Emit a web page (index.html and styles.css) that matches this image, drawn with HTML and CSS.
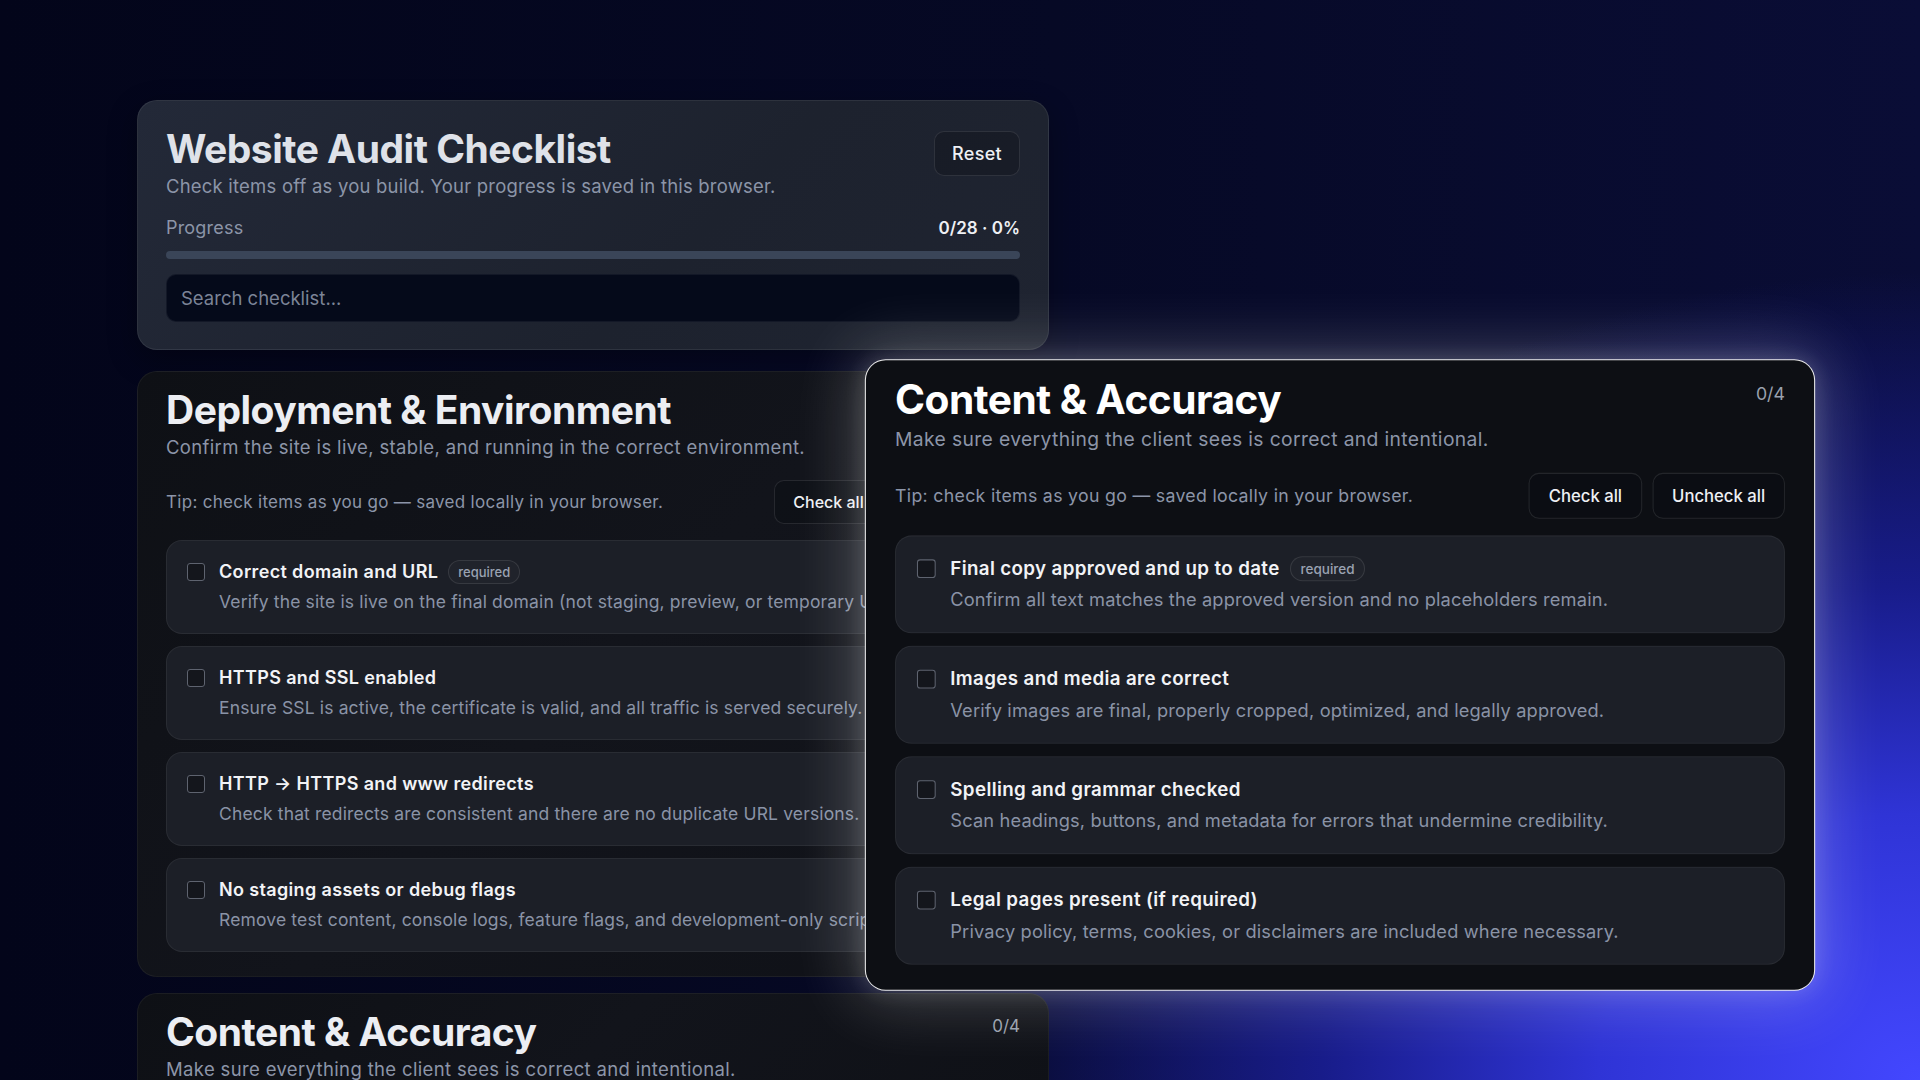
FILE: index.html
```html
<!DOCTYPE html>
<html lang="en">
<head>
<meta charset="utf-8">
<title>Website Audit Checklist</title>
<link rel="stylesheet" href="styles.css">
</head>
<body>
<main class="page">
  <section class="hero">
    <div class="hero-head">
      <div>
        <h1 class="hero-title">Website Audit Checklist</h1>
        <p class="hero-sub">Check items off as you build. Your progress is saved in this browser.</p>
      </div>
      <button class="btn btn-reset">Reset</button>
    </div>
    <div class="progress-row">
      <span class="progress-label">Progress</span>
      <span class="progress-value">0/28 · 0%</span>
    </div>
    <div class="bar"><div class="bar-fill" style="width:0%"></div></div>
    <div class="search">Search checklist...</div>
  </section>

  <section class="card">
    <div class="card-head">
      <h2 class="card-title">Deployment &amp; Environment</h2>
      <span class="count">0/4</span>
    </div>
    <p class="card-sub">Confirm the site is live, stable, and running in the correct environment.</p>
    <div class="tip-row">
      <span class="tip">Tip: check items as you go — saved locally in your browser.</span>
      <div class="actions">
        <button class="btn btn-check">Check all</button>
        <button class="btn btn-uncheck">Uncheck all</button>
      </div>
    </div>
    <ul class="items">
      <li class="item">
        <span class="box"></span>
        <div class="item-body">
          <div class="item-title">Correct domain and URL <span class="badge">required</span></div>
          <div class="item-desc">Verify the site is live on the final domain (not staging, preview, or temporary URLs).</div>
        </div>
      </li>
      <li class="item">
        <span class="box"></span>
        <div class="item-body">
          <div class="item-title">HTTPS and SSL enabled</div>
          <div class="item-desc">Ensure SSL is active, the certificate is valid, and all traffic is served securely.</div>
        </div>
      </li>
      <li class="item">
        <span class="box"></span>
        <div class="item-body">
          <div class="item-title">HTTP → HTTPS and www redirects</div>
          <div class="item-desc">Check that redirects are consistent and there are no duplicate URL versions.</div>
        </div>
      </li>
      <li class="item">
        <span class="box"></span>
        <div class="item-body">
          <div class="item-title">No staging assets or debug flags</div>
          <div class="item-desc">Remove test content, console logs, feature flags, and development-only scripts.</div>
        </div>
      </li>
    </ul>
  </section>

  <section class="card">
    <div class="card-head">
      <h2 class="card-title">Content &amp; Accuracy</h2>
      <span class="count">0/4</span>
    </div>
    <p class="card-sub">Make sure everything the client sees is correct and intentional.</p>
  </section>
</main>

<section class="card spotlight">
  <div class="card-head">
    <h2 class="card-title">Content &amp; Accuracy</h2>
    <span class="count">0/4</span>
  </div>
  <p class="card-sub">Make sure everything the client sees is correct and intentional.</p>
  <div class="tip-row">
    <span class="tip">Tip: check items as you go — saved locally in your browser.</span>
    <div class="actions">
      <button class="btn btn-check">Check all</button>
      <button class="btn btn-uncheck">Uncheck all</button>
    </div>
  </div>
  <ul class="items">
    <li class="item">
      <span class="box"></span>
      <div class="item-body">
        <div class="item-title">Final copy approved and up to date <span class="badge">required</span></div>
        <div class="item-desc">Confirm all text matches the approved version and no placeholders remain.</div>
      </div>
    </li>
    <li class="item">
      <span class="box"></span>
      <div class="item-body">
        <div class="item-title">Images and media are correct</div>
        <div class="item-desc">Verify images are final, properly cropped, optimized, and legally approved.</div>
      </div>
    </li>
    <li class="item">
      <span class="box"></span>
      <div class="item-body">
        <div class="item-title">Spelling and grammar checked</div>
        <div class="item-desc">Scan headings, buttons, and metadata for errors that undermine credibility.</div>
      </div>
    </li>
    <li class="item">
      <span class="box"></span>
      <div class="item-body">
        <div class="item-title">Legal pages present (if required)</div>
        <div class="item-desc">Privacy policy, terms, cookies, or disclaimers are included where necessary.</div>
      </div>
    </li>
  </ul>
</section>
</body>
</html>
```

FILE: styles.css
```css
* { box-sizing: border-box; }

html, body {
  margin: 0;
  width: 1920px;
  height: 1080px;
  overflow: hidden;
}

body {
  position: relative;
  font-family: Inter, "Noto Sans", "Liberation Sans", sans-serif;
  color: #e8eaf0;
  background-color: #04061a;
  background-image:
    radial-gradient(1150px 950px at 1920px 1080px, #4347ff 0%, #2f34d6 28%, #181c8a 52%, rgba(12, 14, 60, 0) 85%),
    linear-gradient(90deg, #03051a 0%, #060925 55%, #0a0d36 100%);
}

h1, h2, p { margin: 0; }
ul { margin: 0; padding: 0; list-style: none; }

.page {
  width: 912px;
  margin-left: 137px;
  padding-top: 100px;
  display: flex;
  flex-direction: column;
}

/* ---------- hero ---------- */
.hero {
  background: linear-gradient(135deg, #232938 0%, #1d222e 60%, #1f2431 100%);
  border: 1px solid rgba(255, 255, 255, 0.07);
  border-radius: 20px;
  padding: 26px 28px 27px;
  box-shadow: 0 10px 30px rgba(0, 0, 0, 0.3);
}

.hero-head {
  display: flex;
  justify-content: space-between;
  align-items: flex-start;
}

.hero-title {
  font-size: 39px;
  line-height: 44px;
  font-weight: 700;
  letter-spacing: -0.5px;
  color: #dfe2e9;
}

.hero-sub {
  margin-top: 3px;
  font-size: 18.5px;
  line-height: 24px;
  letter-spacing: 0.2px;
  color: #8c95a8;
}

.btn {
  font-family: inherit;
  font-size: 16px;
  font-weight: 500;
  color: #eef0f4;
  background: rgba(10, 12, 18, 0.35);
  border: 1px solid rgba(255, 255, 255, 0.1);
  border-radius: 10px;
  height: 44px;
  padding: 0 18px;
}

.btn-reset {
  margin-top: 4px;
  height: 45px;
  padding: 0 17px;
  font-size: 18px;
  letter-spacing: 0.3px;
  background: rgba(20, 24, 34, 0.6);
}

.progress-row {
  margin-top: 18px;
  display: flex;
  justify-content: space-between;
  align-items: center;
  line-height: 24px;
}

.progress-label { color: #8c95a8; font-size: 18px; letter-spacing: 0.2px; }
.progress-value { color: #eef0f4; font-weight: 600; font-size: 17px; }

.bar {
  margin-top: 11px;
  height: 8px;
  border-radius: 8px;
  background: #3a4558;
  overflow: hidden;
}

.bar-fill { height: 100%; background: #7c86ff; }

.search {
  margin-top: 15px;
  height: 48px;
  border-radius: 10px;
  background: #050a1a;
  border: 1px solid rgba(255, 255, 255, 0.06);
  padding: 0 14px;
  display: flex;
  align-items: center;
  font-size: 18.5px;
  color: #7c8497;
}

/* ---------- section card ---------- */
.card {
  margin-top: 21px;
  background: linear-gradient(135deg, #0e1015 0%, #12141b 50%, #0f1117 100%);
  border: 1px solid rgba(255, 255, 255, 0.05);
  border-radius: 20px;
  padding: 18px 28px 24px;
}

.card + .card { margin-top: 16px; }

.card-head {
  display: flex;
  justify-content: space-between;
  align-items: flex-start;
}

.card-title {
  font-size: 39px;
  line-height: 40px;
  font-weight: 700;
  letter-spacing: -0.5px;
  color: #eceef3;
}

.count {
  margin-top: 2px;
  font-size: 17px;
  line-height: 24px;
  color: #9aa1ae;
}

.card-sub {
  margin-top: 4px;
  font-size: 18.5px;
  line-height: 26px;
  letter-spacing: 0.35px;
  color: #8c95a8;
}

.tip-row {
  margin-top: 20px;
  display: flex;
  justify-content: space-between;
  align-items: center;
}

.tip {
  font-size: 17px;
  letter-spacing: 0.3px;
  color: #8c95a8;
}

.actions {
  display: flex;
  gap: 10px;
}

.items {
  margin-top: 16px;
  display: flex;
  flex-direction: column;
  gap: 12px;
}

.item {
  display: flex;
  align-items: flex-start;
  gap: 14px;
  padding: 18px 20px 19px;
  background: #1c1f27;
  border: 1px solid rgba(255, 255, 255, 0.06);
  border-radius: 16px;
  white-space: nowrap;
  overflow: hidden;
}

.box {
  flex: none;
  width: 18px;
  height: 18px;
  margin-top: 4px;
  border: 1.5px solid #5e636f;
  border-radius: 3px;
  background: #14161c;
}

.item-body {
  display: flex;
  flex-direction: column;
  gap: 5px;
  min-width: 0;
}

.item-title {
  display: flex;
  align-items: center;
  gap: 10px;
  font-size: 18px;
  line-height: 26px;
  font-weight: 600;
  letter-spacing: 0.35px;
  color: #f2f3f6;
}

.badge {
  font-size: 13px;
  font-weight: 500;
  line-height: 22px;
  letter-spacing: 0;
  padding: 0 9px;
  color: #9aa2b2;
  border: 1px solid rgba(255, 255, 255, 0.1);
  border-radius: 999px;
  background: rgba(255, 255, 255, 0.02);
}

.item-desc {
  font-size: 17.5px;
  line-height: 24px;
  letter-spacing: 0.15px;
  color: #8a93a6;
}

/* ---------- spotlight (zoomed card) ---------- */
.spotlight {
  position: absolute;
  left: 884px;
  top: 372px;
  width: 912px;
  margin: 0;
  transform: scale(1.042);
  transform-origin: center center;
  background: #0d0f14;
  border: 1.5px solid rgba(255, 255, 255, 0.92);
  box-shadow: 0 0 60px 10px rgba(255, 255, 255, 0.22), 0 0 20px rgba(255, 255, 255, 0.15);
}

.spotlight .card-title { color: #ffffff; }
```
